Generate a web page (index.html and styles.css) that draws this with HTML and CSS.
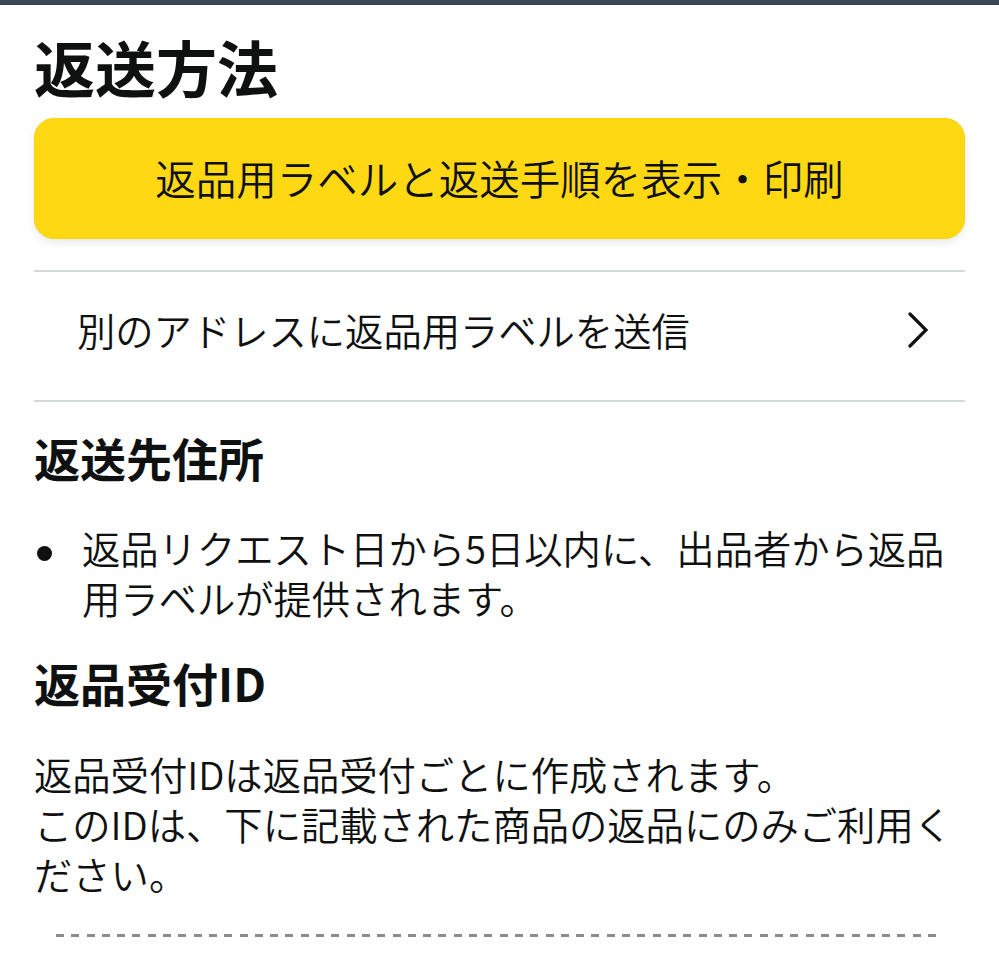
FILE: index.html
```html
<!DOCTYPE html>
<html lang="ja">
<head>
<meta charset="utf-8">
<title>返送方法</title>
<link rel="stylesheet" href="styles.css">
</head>
<body>
<div class="topbar"></div>
<main class="page">
  <h1 class="title">返送方法</h1>
  <button class="primary-btn" type="button">返品用ラベルと返送手順を表示・印刷</button>
  <hr class="divider">
  <a class="link-row" href="#">
    <span class="link-row__label">別のアドレスに返品用ラベルを送信</span>
    <svg class="chevron" width="22" height="36" viewBox="0 0 22 36" aria-hidden="true">
      <polyline points="3,2 19,18 3,34" fill="none" stroke="#0F1111" stroke-width="3.2" stroke-linecap="round" stroke-linejoin="miter"/>
    </svg>
  </a>
  <hr class="divider">

  <h2 class="section-title section-title--first">返送先住所</h2>
  <ul class="bullets">
    <li class="bullets__item">
      <span class="bullets__mark"><span class="bullets__dot"></span></span>
      <span class="bullets__text">返品リクエスト日から5日以内に、出品者から返品用ラベルが提供されます。</span>
    </li>
  </ul>

  <h2 class="section-title section-title--second">返品受付ID</h2>
  <p class="note">返品受付IDは返品受付ごとに作成されます。<br>このIDは、下に記載された商品の返品にのみご利用ください。</p>

  <div class="dashed"></div>
</main>
</body>
</html>
```

FILE: styles.css
```css
* {
  box-sizing: border-box;
}

html,
body {
  margin: 0;
  padding: 0;
  background: #ffffff;
}

body {
  font-family: "Noto Sans CJK JP", "Noto Sans", sans-serif;
  font-weight: 350;
  color: #0f1111;
  width: 999px;
  overflow: hidden;
}

.topbar {
  height: 5px;
  background: #3a4557;
}

.page {
  padding: 0 34px;
  display: flex;
  flex-direction: column;
}

.title {
  margin: 32px 0 0;
  font-size: 61px;
  line-height: 60px;
  font-weight: 700;
  letter-spacing: 0;
}

.primary-btn {
  margin-top: 21px;
  height: 121px;
  width: 100%;
  border: 1px solid #fcd200;
  border-radius: 20px;
  background: #ffd814;
  box-shadow: 0 3px 8px rgba(213, 217, 217, 0.6);
  font-family: inherit;
  font-size: 40.5px;
  font-weight: 350;
  color: #0f1111;
  display: flex;
  align-items: center;
  justify-content: center;
  padding: 0 0 2px;
  cursor: pointer;
}

.divider {
  margin: 0;
  border: 0;
  height: 2px;
  background: #d5d9d9;
}

.primary-btn + .divider {
  margin-top: 31px;
}

.link-row {
  height: 128px;
  display: flex;
  align-items: center;
  justify-content: space-between;
  padding: 0 36px 12px 43px;
  color: #0f1111;
  text-decoration: none;
}

.link-row__label {
  font-size: 38.3px;
  line-height: 50px;
}

.chevron {
  display: block;
  flex: none;
}

.section-title {
  margin: 0;
  font-size: 46px;
  line-height: 56px;
  font-weight: 700;
}

.section-title--first {
  margin-top: 27px;
}

.section-title--second {
  margin-top: 31px;
}

.bullets {
  list-style: none;
  margin: 38px 0 0;
  padding: 0;
}

.bullets__item {
  display: flex;
  font-size: 38.3px;
  line-height: 50px;
}

.bullets__mark {
  flex: none;
  width: 48px;
}

.bullets__dot {
  display: block;
  width: 15px;
  height: 15px;
  margin: 23px 0 0 3px;
  border-radius: 50%;
  background: #0f1111;
}

.bullets__text {
  flex: 1;
}

.note {
  margin: 39px 0 0;
  font-size: 38.3px;
  line-height: 50px;
}

.dashed {
  margin: 35px 22px 0 22px;
  height: 3px;
  background: repeating-linear-gradient(to right, #8c8c8c 0 8px, transparent 8px 15.3px);
}
```
